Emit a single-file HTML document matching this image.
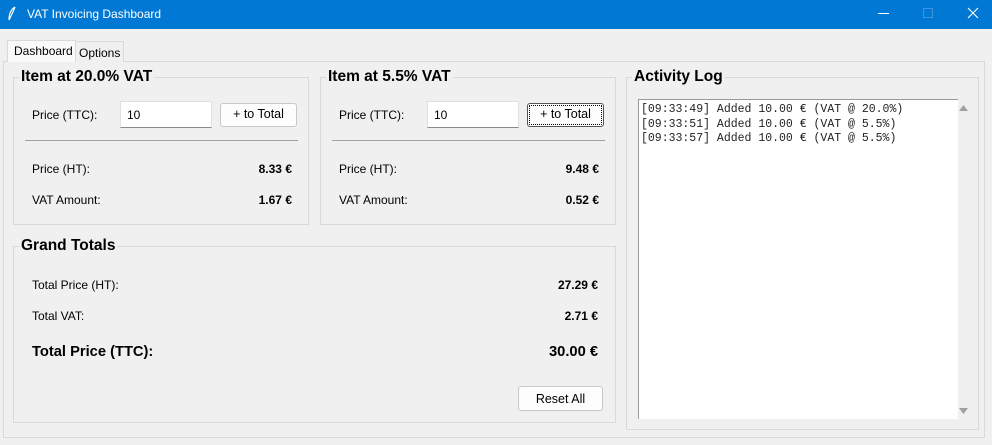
<!DOCTYPE html>
<html><head><meta charset="utf-8"><style>
*{box-sizing:border-box;margin:0;padding:0}
body{width:992px;height:445px;background:#f0f0f0;font-family:"Liberation Sans",sans-serif;font-size:12px;color:#000;position:relative;overflow:hidden}
.a{position:absolute}
.title{left:0;top:0;width:992px;height:29px;background:#0078d4;color:#fff}
.fr{border:1px solid #d9d9d9}
.lbl{background:#f0f0f0;font-weight:bold;font-size:15.5px;padding:0 2px}
.ent{background:#fff;border:1px solid #e0e0e0;border-bottom:1px solid #8a8a8a;padding:6px 6px;font-size:12px}
.btn{background:#fdfdfd;border:1px solid #c8c8c8;border-radius:3px;text-align:center;font-size:12.5px;line-height:21px}
.b{font-weight:bold}
.r{text-align:right}
.sep{height:1px;background:#a0a0a0}
</style></head><body>
<div class="a title">
  <svg class="a" style="left:7px;top:6px" width="10" height="16" viewBox="0 0 10 16"><path d="M8 1 C3 4 2 9 2 14 M8 1 C6 6 4 10 2 14" stroke="#fff" fill="none" stroke-width="1.2"/></svg>
  <div class="a" style="left:27px;top:7px;font-size:12px">VAT Invoicing Dashboard</div>
  <div class="a" style="left:878px;top:13px;width:11px;height:1px;background:#fff"></div>
  <div class="a" style="left:923px;top:8px;width:10px;height:10px;border:1px solid #3f95dd"></div>
  <svg class="a" style="left:967px;top:7px" width="12" height="12"><path d="M1 1L11 11M11 1L1 11" stroke="#fff" stroke-width="1.1"/></svg>
</div>
<div class="a" style="left:3px;top:61px;width:982px;height:377px;border:1px solid #d9d9d9;background:#f0f0f0"></div>
<div class="a" style="left:75px;top:41px;width:49px;height:21px;border:1px solid #d9d9d9;border-bottom:none;background:#f0f0f0;padding:4px 0 0 3px">Options</div>
<div class="a" style="left:7px;top:40px;width:69px;height:22px;border:1px solid #d9d9d9;border-bottom:none;background:#f9f9f9;padding:3px 0 0 6px">Dashboard</div>

<div class="a fr" style="left:13px;top:77px;width:296px;height:148px"></div>
<div class="a lbl" style="left:19px;top:68px">Item at 20.0% VAT</div>
<div class="a" style="left:32px;top:108px">Price (TTC):</div>
<div class="a ent" style="left:120px;top:101px;width:92px;height:27px">10</div>
<div class="a btn" style="left:220px;top:103px;width:77px;height:24px">+ to Total</div>
<div class="a sep" style="left:25px;top:140px;width:273px"></div>
<div class="a" style="left:32px;top:162px">Price (HT):</div>
<div class="a b r" style="left:200px;top:162px;width:92px">8.33 €</div>
<div class="a" style="left:32px;top:193px">VAT Amount:</div>
<div class="a b r" style="left:200px;top:193px;width:92px">1.67 €</div>

<div class="a fr" style="left:320px;top:77px;width:296px;height:148px"></div>
<div class="a lbl" style="left:326px;top:68px">Item at 5.5% VAT</div>
<div class="a" style="left:339px;top:108px">Price (TTC):</div>
<div class="a ent" style="left:427px;top:101px;width:92px;height:27px">10</div>
<div class="a btn" style="left:527px;top:103px;width:77px;height:24px;border-color:#555;outline:1px dotted #000;outline-offset:-3px">+ to Total</div>
<div class="a sep" style="left:332px;top:140px;width:273px"></div>
<div class="a" style="left:339px;top:162px">Price (HT):</div>
<div class="a b r" style="left:507px;top:162px;width:92px">9.48 €</div>
<div class="a" style="left:339px;top:193px">VAT Amount:</div>
<div class="a b r" style="left:507px;top:193px;width:92px">0.52 €</div>

<div class="a fr" style="left:13px;top:246px;width:603px;height:177px"></div>
<div class="a lbl" style="left:19px;top:237px">Grand Totals</div>
<div class="a" style="left:32px;top:278px">Total Price (HT):</div>
<div class="a b r" style="left:480px;top:278px;width:118px">27.29 €</div>
<div class="a" style="left:32px;top:309px">Total VAT:</div>
<div class="a b r" style="left:480px;top:309px;width:118px">2.71 €</div>
<div class="a b" style="left:32px;top:344px;font-size:14.7px">Total Price (TTC):</div>
<div class="a b r" style="left:480px;top:344px;width:118px;font-size:14.7px">30.00 €</div>
<div class="a btn" style="left:518px;top:386px;width:85px;height:25px;line-height:24px">Reset All</div>

<div class="a fr" style="left:626px;top:77px;width:353px;height:353px"></div>
<div class="a lbl" style="left:632px;top:68px">Activity Log</div>
<div class="a" style="left:638px;top:99px;width:320px;height:320px;background:#fff;border-left:1px solid #999;border-top:1px solid #999;padding:3px 0 0 2px;font-family:'Liberation Mono',monospace;font-size:11.5px;line-height:14.5px;color:#222;white-space:pre">[09:33:49] Added 10.00 € (VAT @ 20.0%)
[09:33:51] Added 10.00 € (VAT @ 5.5%)
[09:33:57] Added 10.00 € (VAT @ 5.5%)</div>
<svg class="a" style="left:959px;top:105px" width="9" height="6"><path d="M0 6L4.5 0L9 6Z" fill="#a0a0a0"/></svg>
<svg class="a" style="left:959px;top:408px" width="9" height="6"><path d="M0 0L4.5 6L9 0Z" fill="#a0a0a0"/></svg>
</body></html>
